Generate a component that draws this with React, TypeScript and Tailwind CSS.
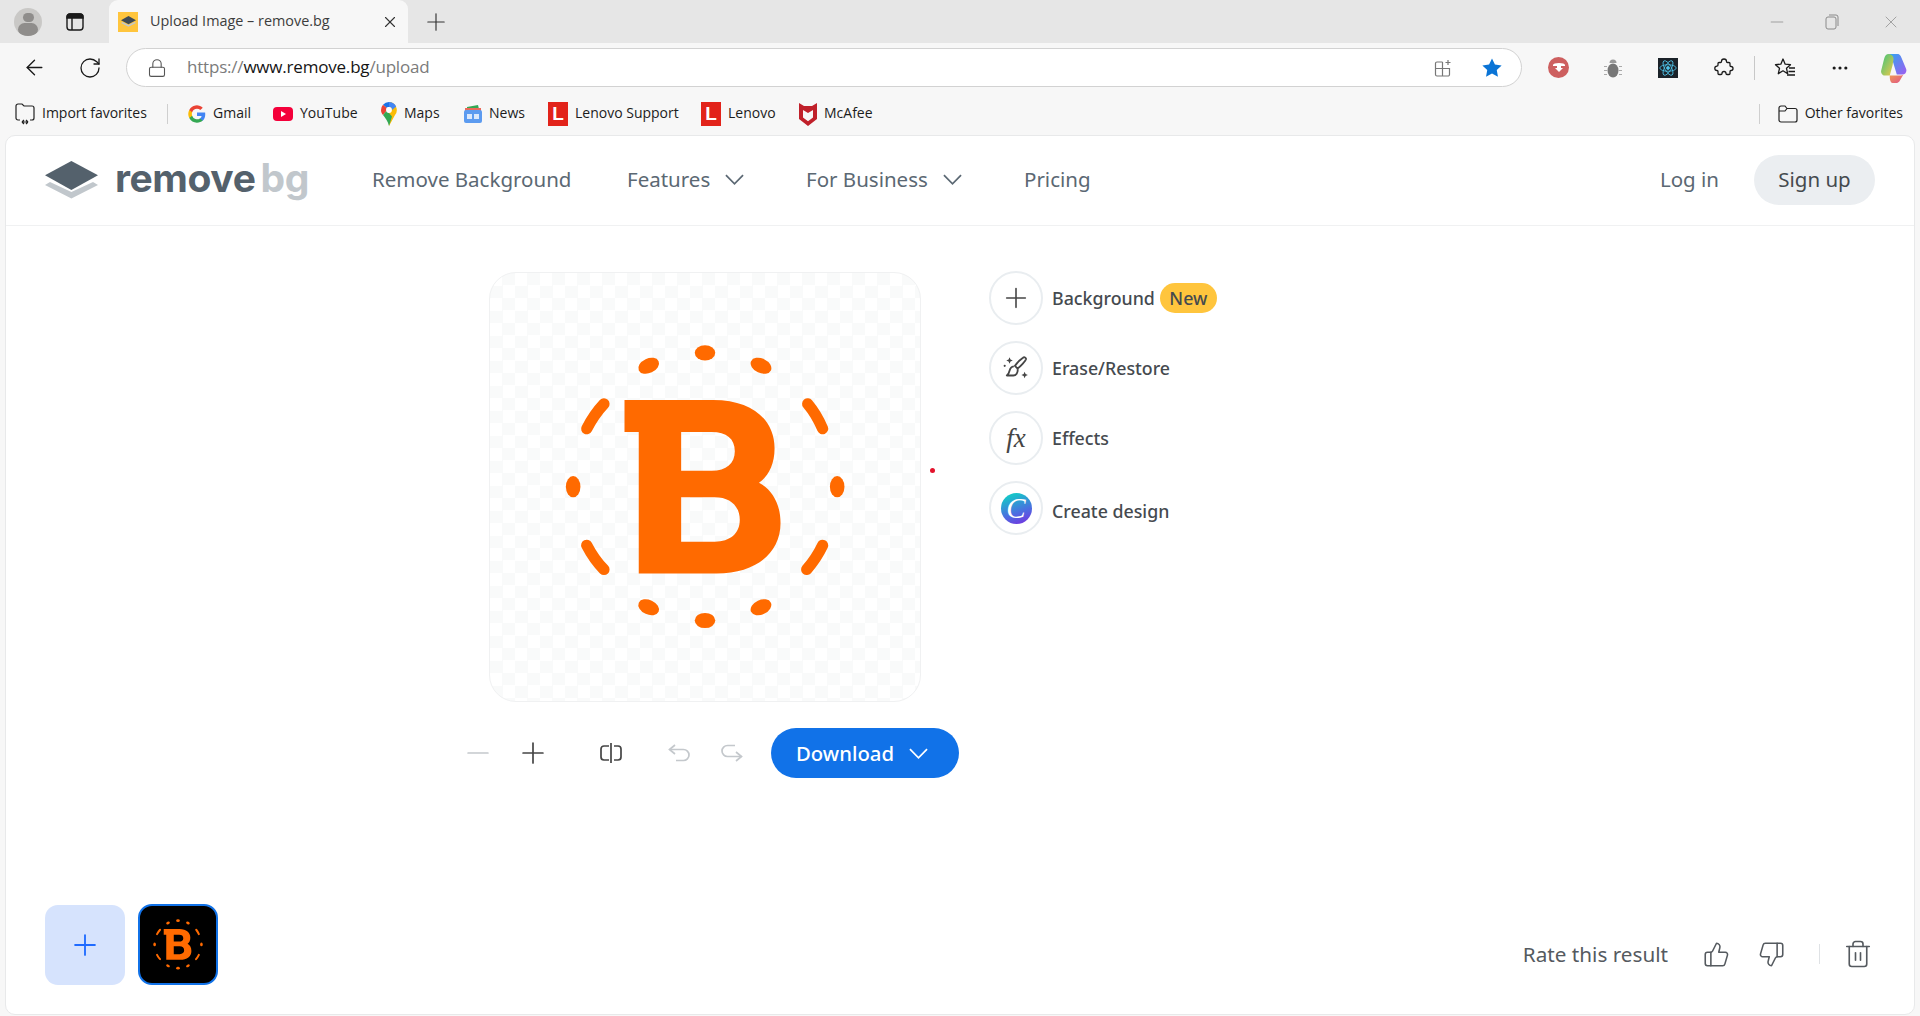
import React from "react";
import {
  ArrowLeft,
  Lock,
  Minus,
  MoreHorizontal,
  Plus,
  RotateCw,
  ThumbsDown,
  ThumbsUp,
  Trash2,
  X,
} from "lucide-react";

const chromeFont = "font-['Open_Sans','Noto_Sans',sans-serif]";
const pageFont = "font-['Noto_Sans',sans-serif]";

function BLogo() {
  const dashes = [
    "M370 430 Q340 462 318 505",
    "M985 430 Q1012 462 1030 505",
    "M318 857 Q340 900 370 930",
    "M1030 857 Q1012 895 982 930",
  ];
  return (
    <svg viewBox="28 35 1294 1292" className="w-full h-full">
      <path
        fill="#ff6a00"
        fillRule="evenodd"
        d="M432 418H700C820 418 885 480 885 565C885 615 865 650 838 668C880 690 903 735 903 790C903 880 830 942 710 942H475V515H432ZM603 515V632H695C740 632 765 610 765 573C765 535 740 515 695 515ZM603 712V846H705C750 846 780 822 780 780C780 738 750 712 705 712Z"
      />
      <ellipse cx="675" cy="276" rx="31" ry="23" fill="#ff6a00" />
      <ellipse cx="675" cy="1084" rx="31" ry="23" fill="#ff6a00" />
      <ellipse cx="277" cy="680" rx="22" ry="32" fill="#ff6a00" />
      <ellipse cx="1074" cy="680" rx="22" ry="32" fill="#ff6a00" />
      <ellipse cx="505" cy="315" rx="33" ry="22" fill="#ff6a00" transform="rotate(-25 505 315)" />
      <ellipse cx="844" cy="315" rx="33" ry="22" fill="#ff6a00" transform="rotate(25 844 315)" />
      <ellipse cx="505" cy="1044" rx="33" ry="22" fill="#ff6a00" transform="rotate(25 505 1044)" />
      <ellipse cx="844" cy="1044" rx="33" ry="22" fill="#ff6a00" transform="rotate(-25 844 1044)" />
      {dashes.map((d) => (
        <path key={d} d={d} fill="none" stroke="#ff6a00" strokeWidth="34" strokeLinecap="round" />
      ))}
    </svg>
  );
}

function StackIcon({ className }: { className?: string }) {
  return (
    <svg viewBox="0 0 53 38" className={className}>
      <path d="M26.4 0 53 14.2 26.4 29 0 14.2Z" fill="currentColor" />
      <path d="M0 24 5 21 26.4 31 48 21 53 24 26.4 37.5Z" fill="#c1c7cc" />
    </svg>
  );
}

function WideChevron({ className }: { className?: string }) {
  return (
    <svg viewBox="0 0 20 11" className={className} fill="none" stroke="currentColor" strokeWidth="1.800">
      <path d="M1 1l9 9 9-9" />
    </svg>
  );
}

function UndoArrow({ className }: { className?: string }) {
  return (
    <svg viewBox="0 0 22 18" className={className} fill="none" stroke="#c4c8cc" strokeWidth="1.700">
      <path d="M7 1 1.500 5.500 7 10" />
      <path d="M1.500 5.500h14a5.500 5.500 0 0 1 0 11H8" />
    </svg>
  );
}

function GoogleIcon() {
  return (
    <svg viewBox="0 0 24 24" className="w-[18px] h-[18px]">
      <path fill="#4285f4" d="M23 12.300c0-.8-.1-1.600-.2-2.300H12v4.500h6.200a5.300 5.300 0 0 1-2.300 3.500v2.900h3.700c2.200-2 3.400-5 3.400-8.600z" />
      <path fill="#34a853" d="M12 23.500c3.100 0 5.700-1 7.600-2.800L15.900 18a7 7 0 0 1-10.400-3.600H1.700v3A11.500 11.500 0 0 0 12 23.500z" />
      <path fill="#fbbc05" d="M5.500 14.400a7 7 0 0 1 0-4.600v-3H1.700a11.500 11.500 0 0 0 0 10.600z" />
      <path fill="#ea4335" d="M12 5.100c1.700 0 3.200.6 4.400 1.700l3.300-3.300A11.500 11.500 0 0 0 1.700 6.800l3.800 3A6.900 6.900 0 0 1 12 5.100z" />
    </svg>
  );
}

function YoutubeIcon() {
  return (
    <svg viewBox="0 0 20 14" className="w-[20px] h-[14px]">
      <rect width="20" height="14" rx="4" fill="#f4003a" />
      <path d="M8 4v6l5-3z" fill="#fff" />
    </svg>
  );
}

function MapsIcon() {
  return (
    <svg viewBox="0 0 16 24" className="w-[16px] h-[24px]">
      <path d="M8 0a8 8 0 0 1 6 13L8 24z" fill="#fbbc04" />
      <path d="M8 0a8 8 0 0 1 7.200 4.500L11 8a3 3 0 0 0-3-3z" fill="#4285f4" />
      <path d="M8 0a8 8 0 0 0-6 2.700L5.800 6A3 3 0 0 1 8 5z" fill="#1a73e8" />
      <path d="M2 2.700A8 8 0 0 0 0 8c0 2 .8 3.600 2 5l3.800-4.500A3 3 0 0 1 5.800 6z" fill="#ea4335" />
      <path d="M2 13c2.300 3 4.800 6 6 11l3-9.500-5.200-6z" fill="#34a853" />
      <circle cx="8" cy="8" r="2.900" fill="#fff" />
    </svg>
  );
}

function NewsIcon() {
  return (
    <svg viewBox="0 0 18 18" className="w-[18px] h-[18px]">
      <path d="M3 2 14 0l1 4H3z" fill="#34a853" />
      <path d="M1 3h16v3H1z" fill="#ea6a5a" />
      <rect x="0" y="5" width="18" height="13" rx="2" fill="#5c9bf0" />
      <rect x="3" y="9" width="5" height="5" fill="#dbe8fb" />
      <rect x="10" y="9" width="5" height="5" fill="#dbe8fb" />
    </svg>
  );
}

function LenovoIcon() {
  return (
    <div className="w-[20px] h-[24px] bg-[#e2231a] flex items-center justify-center text-white font-bold text-[19px] leading-none font-['Liberation_Sans',sans-serif]">
      L
    </div>
  );
}

function McafeeIcon() {
  return (
    <svg viewBox="0 0 18 24" className="w-[18px] h-[24px]">
      <path
        fill="#c0202a"
        fillRule="evenodd"
        d="M0 1 5 4h8l5-3v16l-9 7-9-7ZM4 8v7.500l5 3.800 5-3.800V8L9 11Z"
      />
    </svg>
  );
}

function FolderImportIcon() {
  return (
    <svg viewBox="0 0 20 22" className="w-[20px] h-[22px]" fill="none" stroke="#222" strokeWidth="1.200">
      <path d="M5 17H3a2 2 0 0 1-2-2V3a2 2 0 0 1 2-2h4l2 2h8a2 2 0 0 1 2 2v10a2 2 0 0 1-2 2h-2" />
      <path d="M7 19h6M7 19l2-2M7 19l2 2M13 19l-2-2M13 19l-2 2" />
    </svg>
  );
}

function FolderIcon() {
  return (
    <svg viewBox="0 0 20 18" className="w-[20px] h-[18px]" fill="none" stroke="#222" strokeWidth="1.200">
      <path d="M1 15V3a2 2 0 0 1 2-2h4l2 2.500h8a2 2 0 0 1 2 2V15a2 2 0 0 1-2 2H3a2 2 0 0 1-2-2Z" />
      <path d="M9 3.500 7 6H1" />
    </svg>
  );
}

function Bookmark({ icon, label, className }: { icon: React.ReactNode; label: string; className: string }) {
  return (
    <div className={`flex items-center gap-[7px] ${className}`}>
      {icon}
      <span className="pb-[2px] text-[14px] text-[#1c1c1c] whitespace-nowrap">{label}</span>
    </div>
  );
}

function BrowserChrome() {
  return (
    <div className={chromeFont}>
      {/* tab strip */}
      <div className="h-[43px] bg-[#e6e6e6] flex items-end">
        <div className="h-[43px] w-[109px] flex items-center">
          <div className="ml-[14px] w-[28px] h-[28px] rounded-full bg-[#c9c8c6] overflow-hidden flex flex-col items-center">
            <div className="mt-[5px] w-[11px] h-[11px] rounded-full bg-[#8f8d8b]" />
            <div className="mt-[1px] w-[20px] h-[14px] rounded-full bg-[#8f8d8b]" />
          </div>
          <svg viewBox="0 0 18 18" className="ml-[24px] w-[18px] h-[18px]" fill="none" stroke="#1a1a1a" strokeWidth="1.400">
            <rect x="1" y="1" width="16" height="16" rx="3" />
            <path d="M6 5v12" />
            <path d="M1 4a3 3 0 0 1 3-3h10a3 3 0 0 1 3 3v1H1Z" fill="#1a1a1a" />
          </svg>
        </div>
        <div className="h-[43px] w-[299px] bg-[#f7f7f7] rounded-t-[9px] flex items-center pl-[9px]">
          <div className="w-[20px] h-[20px] bg-[#ffc53d] flex items-center justify-center">
            <StackIcon className="w-[15px] h-[11px] text-[#3f4a54]" />
          </div>
          <span className="ml-[12px] w-[231px] pb-[2px] text-[14.400px] text-[#3d3d3d] whitespace-nowrap">Upload Image – remove.bg</span>
          <X size={18} strokeWidth={1.500} className="text-[#333]" />
        </div>
        <div className="h-[43px] ml-[14px] flex items-center">
          <Plus size={28} strokeWidth={1} className="text-[#333]" />
        </div>
        <div className="ml-auto h-[43px] flex items-center text-[#8a8a8a]">
          <Minus size={20} strokeWidth={0.900} />
          <svg viewBox="0 0 14 16" className="ml-[38px] w-[14px] h-[16px]" fill="none" stroke="#8a8a8a" strokeWidth="1">
            <rect x="1" y="3" width="10" height="12" rx="2" />
            <path d="M4 1h7a2 2 0 0 1 2 2v9" />
          </svg>
          <X size={20} strokeWidth={0.900} className="ml-[42px] mr-[19px]" />
        </div>
      </div>

      {/* toolbar */}
      <div className="h-[49px] bg-[#f7f7f7] flex items-start pt-[5px]">
        <div className="w-[126px] h-[39px] flex items-center">
          <ArrowLeft size={25} strokeWidth={1.300} className="ml-[22px] text-[#1a1a1a]" />
          <RotateCw size={24} strokeWidth={1.300} className="ml-[31px] text-[#1a1a1a]" />
        </div>
        <div className="w-[1396px] h-[39px] bg-white border border-[#d2d2d2] rounded-full flex items-center pl-[20px] pr-[18px]">
          <Lock size={20} strokeWidth={1.300} className="text-[#555]" />
          <div className="ml-[20px] pb-[2px] text-[17px] tracking-[-0.2px] text-[#7b7b7b] whitespace-nowrap">
            https://<span className="text-[#151515]">www.remove.bg</span>/upload
          </div>
          <svg viewBox="0 0 18 18" className="ml-auto w-[18px] h-[18px]" fill="none" stroke="#777" strokeWidth="1.200">
            <path d="M8.500 3H3a1.500 1.500 0 0 0-1.500 1.500v11A1.500 1.500 0 0 0 3 17h11a1.500 1.500 0 0 0 1.500-1.500V9.500H1.500M8.500 3v14" />
            <path d="M14 1v5M11.500 3.500h5" />
          </svg>
          <svg viewBox="0 0 24 24" className="ml-[29px] w-[22px] h-[22px]" fill="#0a74d6">
            <path d="m12 1.500 3.200 6.700 7.300 1-5.300 5.100 1.300 7.300L12 18.100l-6.500 3.500 1.300-7.300L1.500 9.200l7.300-1Z" />
          </svg>
        </div>
        <div className="flex-1 h-[39px] flex items-center">
          <div className="ml-[26px] w-[21px] h-[21px] rounded-full bg-[#cd5f5f] flex items-center justify-center">
            <svg viewBox="0 0 12 10" className="w-[12px] h-[10px]">
              <path d="M0 2a6 2 0 0 1 12 0v1H8v2h2L6 9 2 5h2V3H0Z" fill="#fff" />
            </svg>
          </div>
          <svg viewBox="0 0 18 20" className="ml-[35px] w-[18px] h-[20px]" fill="#777">
            <ellipse cx="9" cy="12.500" rx="5.500" ry="7" />
            <path d="M5.500 5a3.500 3.500 0 0 1 7 0Z" fill="#999" />
            <path d="M0 8h3v1H0zM15 8h3v1h-3zM0 12h3v1H0zM15 12h3v1h-3zM0 16h3v1H0zM15 16h3v1h-3z" fill="#aaa" />
          </svg>
          <div className="ml-[36px] w-[20px] h-[20px] bg-[#1b2229] flex items-center justify-center">
            <svg viewBox="-11 -11 22 22" className="w-[18px] h-[18px]" fill="none" stroke="#4fc3e8" strokeWidth="1">
              <ellipse rx="10" ry="4" />
              <ellipse rx="10" ry="4" transform="rotate(60)" />
              <ellipse rx="10" ry="4" transform="rotate(120)" />
              <circle r="1.800" fill="#4fc3e8" />
            </svg>
          </div>
          <svg viewBox="0 0 20 20" className="ml-[36px] w-[20px] h-[20px]" fill="none" stroke="#1a1a1a" strokeWidth="1.300" strokeLinejoin="round">
            <path d="M7.500 3.500a2.500 2.500 0 0 1 5 0c0 .6 .4 1 1 1h1.500a1 1 0 0 1 1 1v2c0 .6 .4 1 1 1a2 2 0 0 1 0 4c-.6 0-1 .4-1 1v2a1 1 0 0 1-1 1h-2c-.6 0-1-.4-1-1a2 2 0 0 0-4 0c0 .6-.4 1-1 1H5a1 1 0 0 1-1-1v-2c0-.6-.4-1-1-1a2.200 2.200 0 0 1 0-4.400c.6 0 1-.4 1-1V5.500a1 1 0 0 1 1-1h1.500c.6 0 1-.4 1-1Z" />
          </svg>
          <div className="ml-[20px] w-px h-[24px] bg-[#c8c8c8]" />
          <svg viewBox="0 0 22 22" className="ml-[19px] w-[22px] h-[22px]" fill="none" stroke="#1a1a1a" strokeWidth="1.300" strokeLinejoin="round">
            <path d="m9 2 2.200 5.200 5.300.5-4 3.600 1.200 5.400L9 13.800l-4.700 2.900 1.200-5.400-4-3.600 5.300-.5Z" />
            <path d="M15 11h6M14.500 14.500H21M13 18h8" />
          </svg>
          <MoreHorizontal size={20} strokeWidth={1.800} className="ml-[34px] text-[#1a1a1a]" />
          <svg viewBox="0 0 28 32" className="ml-[30px] w-[27px] h-[30px]">
            <defs>
              <linearGradient id="cpA" x1="0" y1="0" x2="1" y2="1">
                <stop offset="0" stopColor="#2ea7f0" />
                <stop offset="1" stopColor="#a05cf0" />
              </linearGradient>
              <linearGradient id="cpB" x1="0" y1="0" x2="1" y2="1">
                <stop offset="0" stopColor="#3bc47a" />
                <stop offset="1" stopColor="#f0c94a" />
              </linearGradient>
              <linearGradient id="cpC" x1="0" y1="0" x2="1" y2="1">
                <stop offset="0" stopColor="#f0a050" />
                <stop offset="1" stopColor="#e0508a" />
              </linearGradient>
            </defs>
            <path d="M9 1h9c3 0 3.500 2 4.500 4l5 12c1 3-1 6-4 6h-6L13 8Z" fill="url(#cpA)" />
            <path d="M9 1C6 1 5 3 4 6L1 18c-1 3 1 6 4 6h5l3-11 1-6c.5-3-2-6-5-6Z" fill="url(#cpB)" />
            <path d="M10 24h12c2 0 3-2 3-2l-4 7c-1 2-2 3-5 3h-3c-2 0-3-3-3-8Z" fill="url(#cpC)" />
          </svg>
        </div>
      </div>

      {/* favorites bar */}
      <div className="h-[43px] bg-[#f7f7f7] flex items-center pl-[15px]">
        <Bookmark icon={<FolderImportIcon />} label="Import favorites" className="w-[152px]" />
        <div className="w-px h-[20px] bg-[#cfcfcf] mr-[20px]" />
        <Bookmark icon={<GoogleIcon />} label="Gmail" className="w-[85px]" />
        <Bookmark icon={<YoutubeIcon />} label="YouTube" className="w-[108px]" />
        <Bookmark icon={<MapsIcon />} label="Maps" className="w-[83px]" />
        <Bookmark icon={<NewsIcon />} label="News" className="w-[84px]" />
        <Bookmark icon={<LenovoIcon />} label="Lenovo Support" className="w-[153px]" />
        <Bookmark icon={<LenovoIcon />} label="Lenovo" className="w-[98px]" />
        <Bookmark icon={<McafeeIcon />} label="McAfee" className="w-[100px]" />
        <div className="ml-auto w-px h-[20px] bg-[#cfcfcf] mr-[18px]" />
        <Bookmark icon={<FolderIcon />} label="Other favorites" className="mr-[17px]" />
      </div>
    </div>
  );
}

function Header() {
  return (
    <div className="h-[90px] pb-[2px] shrink-0 border-b border-[#f0f1f2] flex items-center text-[20.500px] text-[#5b6873]">
      <div className="w-[327px] ml-[39px] flex items-center text-[#54616c]">
        <StackIcon className="w-[53px] h-[38px]" />
        <div className="ml-[17px] -mt-[4px] text-[39px] font-bold leading-none tracking-[-0.4px] font-['Inter',sans-serif]">
          remove<span className="ml-[5px] text-[#c1c7cc]">bg</span>
        </div>
      </div>
      <div className="w-[255px] whitespace-nowrap">Remove Background</div>
      <div className="w-[179px] flex items-center gap-[15px]">
        Features <WideChevron className="w-[19px] h-[11px]" />
      </div>
      <div className="w-[218px] flex items-center gap-[15px]">
        For Business <WideChevron className="w-[19px] h-[11px]" />
      </div>
      <div>Pricing</div>
      <div className="ml-auto mr-[35px]">Log in</div>
      <div className="w-[121px] h-[50px] mr-[39px] rounded-full bg-[#ebeef1] text-[#454a4f] flex items-center justify-center">
        Sign up
      </div>
    </div>
  );
}

function ActionRow({ icon, children }: { icon: React.ReactNode; children: React.ReactNode }) {
  return (
    <div className="flex items-center h-[54px]">
      <div className="w-[54px] h-[54px] rounded-full border-2 border-[#e9edf0] flex items-center justify-center text-[#454545]">
        {icon}
      </div>
      <div className="ml-[9px] flex items-center text-[17.800px] font-medium text-[#454a4f]">{children}</div>
    </div>
  );
}

function ImageColumn() {
  return (
    <div className="w-[432px] shrink-0">
      <div className="relative w-[432px] h-[430px] rounded-[27px] border border-[#f0f1f2] bg-[conic-gradient(#f9fafa_25%,#ffffff_0_50%,#f9fafa_0_75%,#ffffff_0)] bg-[length:25px_25px]">
        <BLogo />
        <div className="absolute left-[440px] top-[195px] w-[5px] h-[5px] rounded-full bg-[#e3132c]" />
      </div>
      <div className="mt-[26px] -ml-[21px] w-[500px] flex items-center">
        <Minus size={34} strokeWidth={1.200} className="-mx-[7px] text-[#c4c8cc]" />
        <Plus size={34} strokeWidth={1.200} className="ml-[28px] -mr-[7px] text-[#454545]" />
        <svg viewBox="0 0 22 20" className="ml-[57px] w-[22px] h-[20px]" fill="none" stroke="#454545" strokeWidth="1.700">
          <path d="M9 3H4a3 3 0 0 0-3 3v8a3 3 0 0 0 3 3h5" />
          <path d="M14 3h4a3 3 0 0 1 3 3v8a3 3 0 0 1-3 3h-4" />
          <path d="M11 0v20" />
        </svg>
        <UndoArrow className="ml-[46px] w-[22px] h-[18px]" />
        <UndoArrow className="ml-[31px] w-[22px] h-[18px] rotate-180" />
        <div className="ml-[28px] w-[188px] h-[50px] pr-[6px] shrink-0 rounded-full bg-[#1172e8] text-white text-[20.300px] font-medium flex items-center justify-center gap-[15px]">
          Download <WideChevron className="w-[19px] h-[11px]" />
        </div>
      </div>
    </div>
  );
}

function SideActions() {
  return (
    <div className="ml-[68px] -mt-px flex flex-col gap-[16px]">
      <ActionRow icon={<Plus size={32} strokeWidth={1.200} />}>
        Background
        <span className="ml-[5px] w-[57px] h-[30px] rounded-full bg-[#ffc53d] flex items-center justify-center">New</span>
      </ActionRow>
      <ActionRow
        icon={
          <svg viewBox="0 0 26 24" className="w-[28px] h-[26px]" fill="none" stroke="#454545" strokeWidth="1.700" strokeLinejoin="round">
            <path d="M19.500 2.500c1.200-1 3-.2 2.800 1.300-.3 1.500-5 6.800-7.800 8.700l-2.500-2.500c2-2.700 6-6.500 7.500-7.500Z" />
            <path d="M11 10.500c-2.500.3-3.500 2-4 4-.3 1.300-1 3.300-2.500 4.500h6c2.500 0 4.500-2.500 4-6" />
            <path d="M7 2l.9 2.100 2.100.9-2.100.9L7 8l-.9-2.100L4 5l2.100-.9ZM21 15.500l.9 2.100 2.100.9-2.100.9-.9 2.100-.9-2.100-2.100-.9 2.100-.9Z" fill="#454545" stroke="none" />
            <circle cx="2.500" cy="10" r="1" fill="#454545" stroke="none" />
          </svg>
        }
      >
        Erase/Restore
      </ActionRow>
      <ActionRow
        icon={<span className="text-[27px] italic leading-none font-['Liberation_Serif',serif]">fx</span>}
      >
        Effects
      </ActionRow>
      <ActionRow
        icon={
          <div className="w-[31px] h-[31px] rounded-full bg-[linear-gradient(160deg,#17c3c9_15%,#4a6fe0_60%,#7a2be0)] flex items-center justify-center text-white text-[29px] italic leading-none font-['Liberation_Serif',serif]">
            C
          </div>
        }
      >
        <span className="mt-[7px]">Create design</span>
      </ActionRow>
    </div>
  );
}

function BottomBar() {
  return (
    <div className="mt-auto flex items-center justify-between pl-[39px] pr-[41px] pb-[29px]">
      <div className="flex items-center gap-[13px]">
        <div className="w-[80px] h-[80px] rounded-[13px] bg-[#d6e3fd] flex items-center justify-center text-[#1f6bff]">
          <Plus size={34} strokeWidth={1.300} />
        </div>
        <div className="w-[80px] h-[81px] rounded-[14px] border-[2.500px] border-[#1172e8] bg-black overflow-hidden">
          <BLogo />
        </div>
      </div>
      <div className="mt-[20px] flex items-center text-[#555a5f]">
        <span className="text-[20.700px]">Rate this result</span>
        <ThumbsUp size={27} strokeWidth={1.400} className="ml-[35px]" />
        <ThumbsDown size={27} strokeWidth={1.400} className="ml-[28px]" />
        <div className="ml-[34px] w-px h-[20px] bg-[#dfe2e5]" />
        <Trash2 size={30} strokeWidth={1.300} className="ml-[23px]" />
      </div>
    </div>
  );
}

export default function App() {
  return (
    <div className="w-full h-[1016px] flex flex-col overflow-hidden bg-[#f7f7f7]">
      <BrowserChrome />
      <div className={`flex-1 mx-[5px] mb-px flex flex-col bg-white rounded-[10px] border border-[#e8e9ea] ${pageFont}`}>
        <Header />
        <div className="pl-[483px] pt-[46px] flex items-start">
          <ImageColumn />
          <SideActions />
        </div>
        <BottomBar />
      </div>
    </div>
  );
}
